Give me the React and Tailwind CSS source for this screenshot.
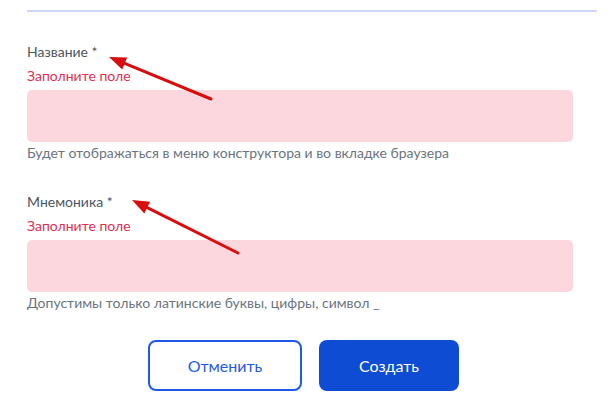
import React from 'react';

const Field = ({ label, hint, className = '' }) => (
  <div className={className}>
    <div className="text-[14px] leading-[24px] text-[#4b5563]">{label} *</div>
    <div className="text-[14px] leading-[24px] text-[#e62e4d]">Заполните поле</div>
    <div className="mt-[2px] h-[52px] w-full rounded-[5px] bg-[#fcd8de]" />
    <div className="text-[14px] leading-[22px] text-[#6b7480]">{hint}</div>
  </div>
);

const Arrow = ({ x1, y1, x2, y2 }) => {
  const a = Math.atan2(y2 - y1, x2 - x1);
  const len = 17;
  const w = 6.5;
  const bx = x2 - len * Math.cos(a);
  const by = y2 - len * Math.sin(a);
  const px = -Math.sin(a) * w;
  const py = Math.cos(a) * w;
  return (
    <g>
      <line x1={x1} y1={y1} x2={bx} y2={by} stroke="#d80d0d" strokeWidth="3" strokeLinecap="round" />
      <polygon points={`${x2},${y2} ${bx + px},${by + py} ${bx - px},${by - py}`} fill="#d80d0d" />
    </g>
  );
};

export default function App() {
  return (
    <div className="relative h-[404px] w-[610px] overflow-hidden bg-white font-['Lato',sans-serif]">
      <div className="pl-[27px] pr-[13px] pt-[10px]">
        <div className="h-[2px] bg-[#cdd6f4]" />
      </div>
      <div className="w-[573px] pl-[27px]">
        <Field className="mt-[28px]" label="Название" hint="Будет отображаться в меню конструктора и во вкладке браузера" />
        <Field className="mt-[26px]" label="Мнемоника" hint="Допустимы только латинские буквы, цифры, символ _" />
        <div className="mt-[26px] flex gap-[17px] pl-[121px]">
          <button className="h-[51px] w-[154px] rounded-[8px] border-2 border-[#1f5ae6] bg-white text-[16px] text-[#1f5ae6]">
            Отменить
          </button>
          <button className="h-[51px] w-[140px] rounded-[8px] bg-[#0d4cd3] text-[16px] text-white">
            Создать
          </button>
        </div>
      </div>
      <svg className="pointer-events-none absolute left-0 top-0" width="610" height="404">
        <Arrow x1={211} y1={99} x2={109} y2={57} />
        <Arrow x1={238} y1={253} x2={132} y2={200} />
      </svg>
    </div>
  );
}
